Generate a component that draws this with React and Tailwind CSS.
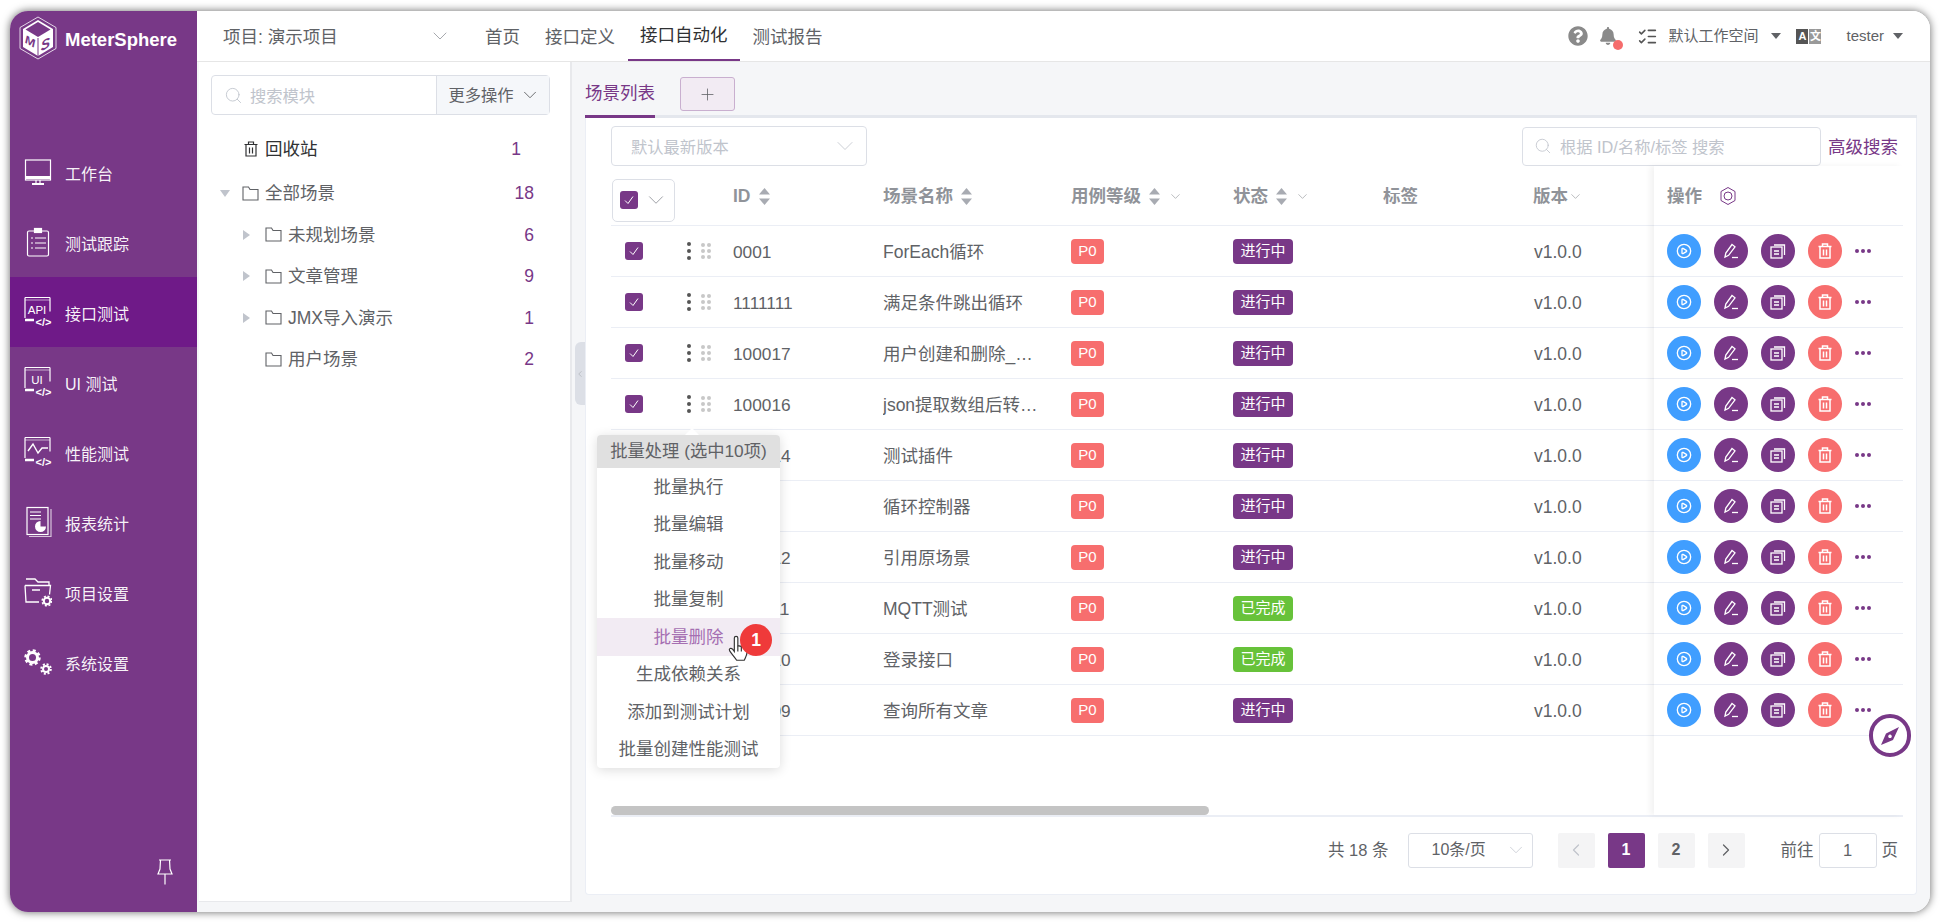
import { ChevronDown, ChevronLeft, ChevronRight, CirclePlay, ListChecks, Plus, Search } from "lucide-react";
import { FaBell, FaQuestionCircle } from "react-icons/fa";

const ROWS = [
  { id: "0001", name: "ForEach循环", status: "进行中" },
  { id: "1111111", name: "满足条件跳出循环", status: "进行中" },
  { id: "100017", name: "用户创建和删除_场景用例", status: "进行中" },
  { id: "100016", name: "json提取数组后转换循环", status: "进行中" },
  { id: "100014", name: "测试插件", status: "进行中" },
  { id: "1003", name: "循环控制器", status: "进行中" },
  { id: "100012", name: "引用原场景", status: "进行中" },
  { id: "100011", name: "MQTT测试", status: "已完成" },
  { id: "100010", name: "登录接口", status: "已完成" },
  { id: "100009", name: "查询所有文章", status: "进行中" },
];

const MENU = ["批量执行", "批量编辑", "批量移动", "批量复制", "批量删除", "生成依赖关系", "添加到测试计划", "批量创建性能测试"];

function CubeLogo() {
  return (
    <svg width="38" height="44" viewBox="0 0 38 44">
      <path d="M19 1 37 11.500V32.500L19 43 1 32.500V11.500Z" fill="none" stroke="#fff" strokeWidth="0.8" />
      <path d="M19 4 34 13V31L19 40 4 31V13Z" fill="#fff" />
      <path d="M19 6 31.500 13.500 19 21 6.500 13.500Z" fill="#783887" />
      <path d="M19 22V40" stroke="#783887" strokeWidth="1" />
      <text x="0" y="0" fontSize="12" fontWeight="bold" fontStyle="italic" fill="#783887" textAnchor="middle" transform="matrix(1 0.55 0 1 11 29.500)">M</text>
      <text x="0" y="0" fontSize="14" fontWeight="bold" fontStyle="italic" fill="#783887" textAnchor="middle" transform="matrix(1 -0.55 0 1 26.500 33)">S</text>
    </svg>
  );
}

function MonitorIcon() {
  return (
    <svg width="28" height="28" viewBox="0 0 28 28" fill="none" stroke="#fff" strokeWidth="1.200">
      <rect x="1.500" y="2" width="25" height="20" />
      <path d="M1.500 19.500h25" strokeWidth="3" />
      <path d="M8 26h12" strokeWidth="2" />
      <path d="M12 22v3M16 22v3" />
    </svg>
  );
}

function ClipboardIcon() {
  return (
    <svg width="28" height="30" viewBox="0 0 28 30" fill="none" stroke="#fff" strokeWidth="1.200">
      <rect x="3.500" y="4" width="21" height="25" rx="1.500" />
      <rect x="10.500" y="1.500" width="7" height="4" fill="#fff" />
      <path d="M7 11h2M11 11h11M7 16h2M11 16h11M7 21h2M11 21h11" />
    </svg>
  );
}

function CodeBoxIcon({ label, wave }) {
  return (
    <svg width="28" height="32" viewBox="0 0 28 32" fill="none" stroke="#fff">
      <path d="M1 1.500h25M1 1.500v20.500M26 1.500v14" strokeWidth="1.200" />
      <path d="M1 24h9" strokeWidth="2.500" />
      <path d="M1 4h25" strokeWidth="0.600" />
      {wave ? (
        <path d="M4 15l5-7 5 9 4-5h6" strokeWidth="1.400" />
      ) : (
        <text x="13" y="18" fontSize="11.500" fill="#fff" stroke="none" textAnchor="middle" fontFamily="Liberation Sans">
          {label}
        </text>
      )}
      <text x="19.500" y="30" fontSize="11" fontWeight="bold" fill="#fff" stroke="none" textAnchor="middle" fontFamily="Liberation Sans">
        {"</>"}
      </text>
    </svg>
  );
}

function ReportIcon() {
  return (
    <svg width="28" height="32" viewBox="0 0 28 32" fill="none" stroke="#fff" strokeWidth="1.200">
      <rect x="3" y="1.500" width="21" height="27" />
      <path d="M5 30.500h22V3" opacity="0.700" />
      <path d="M6 6h11M6 9.500h11M6 13h11" />
      <path d="M16.500 15a5.500 5.500 0 1 0 5.500 5.500h-5.500z" fill="#fff" stroke="none" />
    </svg>
  );
}

function FolderGearIcon() {
  return (
    <svg width="28" height="32" viewBox="0 0 28 32" fill="none" stroke="#fff" strokeWidth="1.300">
      <path d="M2 3h9l3 3h11v4" />
      <path d="M1 9.500h25.500l-1 9M1 9.500 2 26h13" />
      <path d="M8 14h8" strokeWidth="1.500" />
      <circle cx="23" cy="25" r="3.200" strokeWidth="2" />
      <circle cx="23" cy="25" r="4.800" strokeWidth="1.600" strokeDasharray="2 1.770" />
    </svg>
  );
}

function GearsIcon() {
  return (
    <svg width="28" height="28" viewBox="0 0 28 28" fill="none" stroke="#fff">
      <circle cx="8.500" cy="9.500" r="5" strokeWidth="3" />
      <circle cx="8.500" cy="9.500" r="7" strokeWidth="2.500" strokeDasharray="3 2.500" />
      <circle cx="22" cy="21" r="3" strokeWidth="2" />
      <circle cx="22" cy="21" r="4.800" strokeWidth="2" strokeDasharray="2 1.770" />
    </svg>
  );
}

function PushPinIcon() {
  return (
    <svg width="16" height="26" viewBox="0 0 16 26" fill="none" stroke="#fff" strokeWidth="1.200">
      <path d="M2 1h12M3.500 1l-.5 9L1 15h14l-2-5-.5-9" />
      <path d="M8 15v10.500" />
    </svg>
  );
}

function TrashIcon({ size = 16, color = "#fff", width = 1.500 }) {
  return (
    <svg width={size} height={size} viewBox="0 0 16 16" fill="none" stroke={color} strokeWidth={width}>
      <path d="M1.500 3.500h13M5.500 3.500V1h5v2.500" />
      <path d="M3 3.500V15h10V3.500" />
      <path d="M6.500 6.500v6M9.500 6.500v6" />
    </svg>
  );
}

function FolderIcon() {
  return (
    <svg width="17" height="15" viewBox="0 0 17 15" fill="none" stroke="#606266" strokeWidth="1.100">
      <path d="M1 1h5.500l1.500 2.500h8V14H1z" />
    </svg>
  );
}

function SortCaret() {
  return (
    <svg width="11" height="17" viewBox="0 0 11 17" fill="#a8abb2">
      <path d="M5.500 0 11 6.500H0z" />
      <path d="M5.500 17 0 10.500h11z" />
    </svg>
  );
}

function Caret({ className }) {
  return <span className={`inline-block h-0 w-0 border-x-[5.500px] border-t-[6px] border-x-transparent ${className}`} />;
}

function CheckBox() {
  return (
    <span className="flex h-[18px] w-[18px] items-center justify-center rounded-[3px] bg-[#783887]">
      <svg width="12" height="12" viewBox="0 0 12 12" fill="none" stroke="#fff" strokeWidth="1">
        <path d="M2 6.500 5 9.500 10 2.500" />
      </svg>
    </span>
  );
}

function SideItem({ icon, label, active }) {
  return (
    <div className={`flex h-[70px] items-center gap-[13px] pl-[14px] text-[16px] text-white/95 ${active ? "bg-[#6f1a88]" : ""}`}>
      <span className="flex w-[28px] items-center justify-center">{icon}</span>
      <span className="pt-[5px]">{label}</span>
    </div>
  );
}

function TreeRow({ indent, caret, label, count, open }) {
  return (
    <div className={`flex h-[41.500px] items-center pr-[36px] text-[17.500px] text-[#606266] ${indent}`}>
      <span className="flex w-[22px] items-center">
        {caret ? (
          open ? (
            <span className="h-0 w-0 border-x-[5px] border-t-[7px] border-x-transparent border-t-[#c0c4cc]" />
          ) : (
            <span className="h-0 w-0 border-y-[5px] border-l-[7px] border-y-transparent border-l-[#c0c4cc]" />
          )
        ) : null}
      </span>
      <FolderIcon />
      <span className="ml-[6px] flex-1">{label}</span>
      <span className="text-[#783887]">{count}</span>
    </div>
  );
}

function HeaderLabel({ children, sort, filter }) {
  return (
    <div className="flex items-center gap-[8px] pt-[1px] text-[17.500px] font-bold text-[#909399]">
      {children}
      {sort ? <SortCaret /> : null}
      {filter ? <ChevronDown size={15} strokeWidth={1} className="text-[#909399]" /> : null}
    </div>
  );
}

function ActionButton({ color, children }) {
  return <span className={`flex h-[34px] w-[34px] items-center justify-center rounded-full ${color}`}>{children}</span>;
}

function PageButton({ children, active, dim }) {
  return (
    <span
      className={`flex h-[35px] w-[37px] items-center justify-center rounded-[2px] text-[16px] font-bold ${
        active ? "bg-[#783887] text-white" : "bg-[#f4f4f5]"
      } ${dim ? "text-[#c0c4cc]" : active ? "" : "text-[#606266]"}`}
    >
      {children}
    </span>
  );
}

export default function App() {
  return (
    <div className="h-[922px] w-[1940px] overflow-hidden bg-white pl-[10px] pt-[11px] font-['Liberation_Sans','Noto_Sans_CJK_SC',sans-serif]">
      <div className="relative flex h-[901px] w-[1920px] overflow-hidden rounded-[18px] shadow-[0_0_8px_rgba(0,0,0,0.6)]">
        <aside className="flex w-[187px] shrink-0 flex-col bg-[#783887]">
          <div className="flex h-[126px] items-start gap-[8px] pl-[9px] pt-[5px]">
            <CubeLogo />
            <span className="pt-[10px] text-[18.500px] font-bold text-white">MeterSphere</span>
          </div>
          <SideItem icon={<MonitorIcon />} label="工作台" />
          <SideItem icon={<ClipboardIcon />} label="测试跟踪" />
          <SideItem icon={<CodeBoxIcon label="API" />} label="接口测试" active />
          <SideItem icon={<CodeBoxIcon label="UI" />} label="UI 测试" />
          <SideItem icon={<CodeBoxIcon wave />} label="性能测试" />
          <SideItem icon={<ReportIcon />} label="报表统计" />
          <SideItem icon={<FolderGearIcon />} label="项目设置" />
          <SideItem icon={<GearsIcon />} label="系统设置" />
          <div className="mt-auto flex justify-end pb-[27px] pr-[24px]">
            <PushPinIcon />
          </div>
        </aside>

        <div className="flex min-w-0 flex-1 flex-col bg-[#f5f6f8]">
          <header className="flex h-[51px] shrink-0 items-stretch border-b border-[#e6e6e6] bg-white pl-[26px] text-[#606266]">
            <div className="flex w-[249.500px] items-center text-[17.500px]">
              <span className="w-[205px] pt-[2px]">项目: 演示项目</span>
              <ChevronDown size={24} strokeWidth={0.8} className="text-[#909399]" />
            </div>
            <nav className="flex text-[17.500px]">
              <span className="flex items-center px-[12.500px] pt-[2px]">首页</span>
              <span className="flex items-center px-[12.500px] pt-[2px]">接口定义</span>
              <span className="flex items-center border-b-2 border-[#783887] px-[12.500px] text-[#303133]">接口自动化</span>
              <span className="flex items-center px-[12.500px] pt-[2px]">测试报告</span>
            </nav>
            <div className="ml-auto flex items-center pr-[27px] text-[15px]">
              <FaQuestionCircle size={20} className="text-[#8a8a8a]" />
              <span className="relative ml-[11px]">
                <FaBell size={18} className="text-[#8a8a8a]" />
                <span className="absolute -right-[6px] top-[13px] h-[10px] w-[10px] rounded-full bg-[#f56c6c]" />
              </span>
              <ListChecks size={21} strokeWidth={1.800} className="ml-[20px] text-[#555]" />
              <span className="ml-[10px]">默认工作空间</span>
              <Caret className="ml-[13px] border-t-[#606266]" />
              <span className="ml-[15px] flex gap-px text-[11px] font-bold text-white">
                <span className="flex h-[15px] w-[12px] items-center justify-center bg-[#555]">A</span>
                <span className="flex h-[15px] w-[12px] items-center justify-center bg-[#999]">文</span>
              </span>
              <span className="ml-[25px]">tester</span>
              <Caret className="ml-[9px] border-t-[#606266]" />
            </div>
          </header>

          <div className="relative flex min-h-0 flex-1 pb-[10px]">
            <section className="ml-[2px] mr-[13px] w-[373px] shrink-0 border-r-2 border-b border-[#e8e9ec] bg-white pt-[13px]">
              <div className="ml-[12px] flex h-[40px] w-[339px] rounded-[4px] border border-[#dcdfe6] text-[16.300px]">
                <div className="flex flex-1 items-center gap-[7px] pl-[12px] text-[#c0c4cc]">
                  <Search size={19} strokeWidth={1.100} />
                  <span className="pt-[2px]">搜索模块</span>
                </div>
                <div className="flex w-[113px] items-center justify-center gap-[5px] border-l border-[#dcdfe6] bg-[#f5f7fa] pl-[3px] text-[#606266]">
                  <span className="pt-[1px]">更多操作</span>
                  <ChevronDown size={22} strokeWidth={1} />
                </div>
              </div>
              <div className="mt-[13px] flex h-[41.500px] items-center pl-[44px] pr-[49px] text-[17.500px] text-[#303133]">
                <TrashIcon size={16} color="#303133" width={1.200} />
                <span className="ml-[6px] flex-1">回收站</span>
                <span className="text-[#783887]">1</span>
              </div>
              <div className="mt-[3px]">
                <TreeRow indent="pl-[21px]" caret open label="全部场景" count="18" />
                <TreeRow indent="pl-[44px]" caret label="未规划场景" count="6" />
                <TreeRow indent="pl-[44px]" caret label="文章管理" count="9" />
                <TreeRow indent="pl-[44px]" caret label="JMX导入演示" count="1" />
                <TreeRow indent="pl-[44px]" label="用户场景" count="2" />
              </div>
            </section>

            <div className="absolute left-[378px] top-[280px] flex h-[63px] w-[10px] items-center justify-center rounded-l-[6px] bg-[#dcdfe6]">
              <ChevronLeft size={12} strokeWidth={1} className="text-[#909399]" />
            </div>

            <main className="mb-[7px] flex w-[1332px] shrink-0 flex-col">
              <div className="flex h-[56px] shrink-0 items-stretch border-b-[3px] border-[#e4e7ed]">
                <span className="-mb-[3px] flex w-[70px] items-center justify-center border-b-[3px] border-[#783887] pt-[9px] text-[17.500px] text-[#783887]">
                  场景列表
                </span>
                <span className="ml-[25px] mt-[15px] flex h-[34px] w-[55px] items-center justify-center rounded-[3px] border border-[#c9afcf] bg-[#f2ebf3] text-[#606266]">
                  <Plus size={19} strokeWidth={1} />
                </span>
              </div>

              <div className="flex min-h-0 flex-1 flex-col rounded-b-[4px] border border-t-0 border-[#ebeef5] bg-white pl-[25px] pr-[13px] pt-[8px]">
                <div className="flex h-[40px] shrink-0 justify-between pr-[5px]">
                  <div className="flex w-[256px] items-center justify-between rounded-[4px] border border-[#dcdfe6] pl-[19px] pr-[7px] text-[16.300px] text-[#c0c4cc]">
                    <span className="pt-[2px]">默认最新版本</span>
                    <ChevronDown size={28} strokeWidth={0.7} />
                  </div>
                  <div className="flex items-center gap-[7px]">
                    <div className="flex h-[39px] w-[299px] items-center gap-[8px] rounded-[4px] border border-[#dcdfe6] pl-[11px] text-[16.300px] text-[#c0c4cc]">
                      <Search size={18} strokeWidth={1.100} />
                      <span className="pt-[2px]">根据 ID/名称/标签 搜索</span>
                    </div>
                    <span className="pt-[2px] text-[17.500px] text-[#783887]">高级搜索</span>
                  </div>
                </div>

                <div className="relative flex h-[651px] w-[1292px] shrink-0 border-b-2 border-[#ebeef5]">
                  <div className="flex w-[1043px] shrink-0 flex-col">
                    <div className="grid h-[60px] grid-cols-[122px_150px_188px_162px_150px_150px_121px] items-center border-b border-[#ebeef5]">
                      <div className="ml-px mt-[9px] flex h-[43px] w-[63px] items-center justify-between rounded-[5px] border border-[#dcdfe6] pl-[7px] pr-[5px]">
                        <CheckBox />
                        <ChevronDown size={26} strokeWidth={0.8} className="text-[#909399]" />
                      </div>
                      <HeaderLabel sort>ID</HeaderLabel>
                      <HeaderLabel sort>场景名称</HeaderLabel>
                      <HeaderLabel sort filter>用例等级</HeaderLabel>
                      <HeaderLabel sort filter>状态</HeaderLabel>
                      <HeaderLabel>标签</HeaderLabel>
                      <div className="flex items-center pt-[1px] text-[17.500px] font-bold text-[#909399]">
                        版本
                        <ChevronDown size={15} strokeWidth={1} />
                      </div>
                    </div>
                    {ROWS.map((row) => (
                      <div
                        className="grid h-[51px] grid-cols-[122px_150px_188px_162px_150px_150px_121px] items-center border-b border-[#ebeef5] text-[17.500px] text-[#606266]"
                        key={row.id}
                      >
                        <div className="flex items-center pl-[14px]">
                          <CheckBox />
                          <span className="ml-[44px] flex flex-col gap-[3px]">
                            <span className="h-[4px] w-[4px] rounded-full bg-[#555]" />
                            <span className="h-[4px] w-[4px] rounded-full bg-[#555]" />
                            <span className="h-[4px] w-[4px] rounded-full bg-[#555]" />
                          </span>
                          <span className="ml-[10px] grid grid-cols-2 gap-[2px]">
                            <span className="h-[4px] w-[4px] rounded-full bg-[#c8c8c8]" />
                            <span className="h-[4px] w-[4px] rounded-full bg-[#c8c8c8]" />
                            <span className="h-[4px] w-[4px] rounded-full bg-[#c8c8c8]" />
                            <span className="h-[4px] w-[4px] rounded-full bg-[#c8c8c8]" />
                            <span className="h-[4px] w-[4px] rounded-full bg-[#c8c8c8]" />
                            <span className="h-[4px] w-[4px] rounded-full bg-[#c8c8c8]" />
                          </span>
                        </div>
                        <div className="pt-[3px] text-[17.300px]">{row.id}</div>
                        <div className="w-[155px] truncate pt-[3px]">{row.name}</div>
                        <div>
                          <span className="flex h-[25px] w-[33px] items-center justify-center rounded-[4px] bg-[#f76e6e] text-[15px] text-white">P0</span>
                        </div>
                        <div>
                          <span className={`flex h-[25px] w-[60px] items-center justify-center rounded-[4px] text-[15px] text-white ${row.status === "已完成" ? "bg-[#67c23a]" : "bg-[#783887]"}`}>
                            {row.status}
                          </span>
                        </div>
                        <div />
                        <div className="pl-px pt-[3px]">v1.0.0</div>
                      </div>
                    ))}
                    <div className="mt-auto h-[9px] w-[598px] rounded-[5px] bg-[#c4c4c4]" />
                  </div>

                  <div className="flex w-[249px] shrink-0 flex-col bg-white pl-[13px] shadow-[-4px_0_6px_rgba(0,0,0,0.05)]">
                    <div className="-ml-[13px] flex h-[60px] items-center gap-[16px] border-b border-[#ebeef5] pl-[13px] text-[17.500px] font-bold text-[#909399]">
                      <span className="pt-[1px]">操作</span>
                      <svg width="20" height="20" viewBox="0 0 20 20" fill="none" stroke="#783887" strokeWidth="1">
                        <path d="M10 1.500 17 5.500V14.500L10 18.500 3 14.500V5.500Z" strokeLinejoin="round" />
                        <circle cx="10" cy="10" r="4" />
                      </svg>
                    </div>
                    {ROWS.map((row) => (
                      <div className="-ml-[13px] flex h-[51px] items-center gap-[13px] border-b border-[#ebeef5] pl-[13px]" key={row.id}>
                        <ActionButton color="bg-[#409eff]">
                          <CirclePlay size={16} strokeWidth={2} className="text-white" />
                        </ActionButton>
                        <ActionButton color="bg-[#783887]">
                          <svg width="18" height="18" viewBox="0 0 18 18" fill="none" stroke="#fff" strokeWidth="1.300">
                            <path d="M3 15l.8-4L10 2.500l3 2.300-6.400 8.500z" />
                            <path d="M10 15.500h6" />
                          </svg>
                        </ActionButton>
                        <ActionButton color="bg-[#783887]">
                          <svg width="18" height="18" viewBox="0 0 18 18" fill="none" stroke="#fff" strokeWidth="1.300">
                            <rect x="2" y="5" width="11" height="11" />
                            <path d="M5 3h10.500v10M5 9h5M5 12h5" />
                          </svg>
                        </ActionButton>
                        <ActionButton color="bg-[#f76e6e]">
                          <TrashIcon />
                        </ActionButton>
                        <span className="flex gap-[2px]">
                          <span className="h-[4px] w-[4px] rounded-full bg-[#783887]" />
                          <span className="h-[4px] w-[4px] rounded-full bg-[#783887]" />
                          <span className="h-[4px] w-[4px] rounded-full bg-[#783887]" />
                        </span>
                      </div>
                    ))}
                  </div>

                  <div className="absolute -left-[14px] top-[269px] z-10 w-[183px] rounded-[4px] bg-white text-center text-[17.500px] text-[#606266] shadow-[0_2px_12px_rgba(0,0,0,0.14)]">
                    <span className="absolute left-[88px] -top-[7px] h-0 w-0 border-x-[7px] border-b-[7px] border-x-transparent border-b-white" />
                    <div className="flex h-[33px] items-center justify-center rounded-t-[4px] bg-[#e0e0e0] pt-[1px] text-[17.300px]">批量处理 (选中10项)</div>
                    {MENU.map((item) => (
                      <div
                        className={`relative flex h-[37.500px] items-center justify-center ${item === "批量删除" ? "bg-[#f2ebf3] text-[#a56fb2]" : ""}`}
                        key={item}
                      >
                        {item}
                        {item === "批量删除" ? (
                          <>
                            <svg className="absolute left-[130px] top-[16px]" width="24" height="28" viewBox="0 0 20 24" fill="#fff" stroke="#333" strokeWidth="1">
                              <path d="M6 12V3.500a1.500 1.500 0 0 1 3 0V10l5 1c2 .5 3 1.500 3 3.500 0 3-1 5-2.500 8H8c-2-3-4-5-6-8-1-2 1-3 2.500-1.500L6 15z" />
                              <path d="M9 10v5M12 11v4" />
                            </svg>
                            <span className="absolute left-[143px] top-[6px] flex h-[32px] w-[32px] items-center justify-center rounded-full bg-[#ef3a3a] text-[17.500px] font-bold text-white">
                              1
                            </span>
                          </>
                        ) : null}
                      </div>
                    ))}
                  </div>
                </div>

                <div className="flex flex-1 items-center justify-end pb-[11px] pr-[5px] text-[16.500px] text-[#606266]">
                  <span>共 18 条</span>
                  <span className="ml-[19px] flex h-[35px] w-[125px] items-center justify-between rounded-[3px] border border-[#dcdfe6] pl-[23px] pr-[5px] text-[16px]">
                    10条/页
                    <ChevronDown size={22} strokeWidth={0.8} className="text-[#c0c4cc]" />
                  </span>
                  <span className="ml-[25px] flex gap-[13px]">
                    <PageButton dim><ChevronLeft size={20} strokeWidth={1.500} /></PageButton>
                    <PageButton active>1</PageButton>
                    <PageButton>2</PageButton>
                    <PageButton><ChevronRight size={20} strokeWidth={1.500} /></PageButton>
                  </span>
                  <span className="ml-[36px]">前往</span>
                  <span className="mx-[5px] flex h-[35px] w-[58px] items-center justify-center rounded-[3px] border border-[#dcdfe6]">1</span>
                  <span>页</span>
                </div>
              </div>
            </main>
          </div>
        </div>

        <div className="absolute left-[1859px] top-[703px] flex h-[43px] w-[42px] items-center justify-center rounded-full border-[4px] border-[#783887] bg-white">
          <svg width="24" height="24" viewBox="0 0 24 24" fill="#783887">
            <path fillRule="evenodd" d="M21 3 15 16 3 21 8 9.500zM12 10.500a1.800 1.800 0 1 0 .01 0z" />
          </svg>
        </div>
      </div>
    </div>
  );
}
